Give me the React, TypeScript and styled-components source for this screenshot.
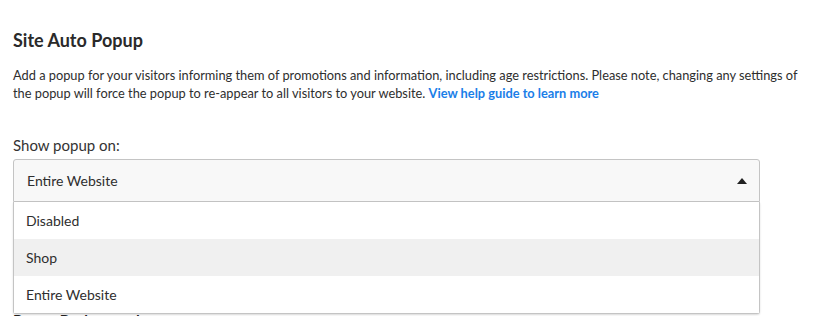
import React from "react";
import styled, { createGlobalStyle } from "styled-components";

const GlobalStyle = createGlobalStyle`
  body {
    margin: 0;
    background: #fff;
    font-family: Lato, "Open Sans", sans-serif;
    color: #2b2b2b;
  }
`;

const Page = styled.div`
  padding: 28px 8px 0 13px;
`;

const Title = styled.h2`
  margin: 0;
  font-size: 18px;
  font-weight: 700;
  line-height: 24px;
  color: #2a2a2a;
`;

const Description = styled.p`
  margin: 14px 0 0;
  font-size: 12.8px;
  line-height: 18px;
  color: #2e2e2e;

  a {
    color: #1a7ee8;
    font-weight: 700;
    text-decoration: none;
  }
`;

const Field = styled.div`
  margin-top: 33px;
  position: relative;
  width: 747px;
`;

const Label = styled.div`
  font-size: 15px;
  line-height: 20px;
  color: #333;
  margin-bottom: 4px;
`;

const SelectBox = styled.div`
  height: 43px;
  box-sizing: border-box;
  border: 1px solid #c4c4c4;
  border-radius: 3px 3px 0 0;
  background: #f8f8f8;
  display: flex;
  align-items: center;
  justify-content: space-between;
  padding: 0 12px 0 13px;
  font-size: 14px;
  color: #2e2e2e;
`;

const Caret = styled.span`
  width: 0;
  height: 0;
  border-left: 5px solid transparent;
  border-right: 5px solid transparent;
  border-bottom: 6px solid #222;
`;

const Menu = styled.ul`
  position: absolute;
  left: 0;
  right: 0;
  top: 67px;
  margin: 0;
  padding: 0;
  list-style: none;
  background: #fff;
  border: 1px solid #c4c4c4;
  border-top: 0;
  border-radius: 0 0 3px 3px;
  box-shadow: 0 1px 2px rgba(0, 0, 0, 0.15);
  z-index: 2;
`;

const Option = styled.li<{ $hover?: boolean }>`
  height: 37px;
  display: flex;
  align-items: center;
  padding: 0 12px;
  font-size: 14px;
  color: #2e2e2e;
  background: ${(p) => (p.$hover ? "#f0f0f0" : "#fff")};
`;

const NextField = styled.div`
  margin-top: 108px;
  font-size: 15px;
  line-height: 20px;
  font-weight: 700;
  color: #222;
`;

const options = ["Disabled", "Shop", "Entire Website"];

export default function App() {
  return (
    <>
      <GlobalStyle />
      <Page>
        <Title>Site Auto Popup</Title>
        <Description>
          Add a popup for your visitors informing them of promotions and information, including age restrictions. Please note, changing any settings of the popup will force the popup to re-appear to all visitors to your website.{" "}
          <a href="#">View help guide to learn more</a>
        </Description>
        <Field>
          <Label>Show popup on:</Label>
          <SelectBox>
            Entire Website
            <Caret />
          </SelectBox>
          <Menu>
            {options.map((o) => (
              <Option key={o} $hover={o === "Shop"}>
                {o}
              </Option>
            ))}
          </Menu>
          <NextField>Popup Background</NextField>
        </Field>
      </Page>
    </>
  );
}
